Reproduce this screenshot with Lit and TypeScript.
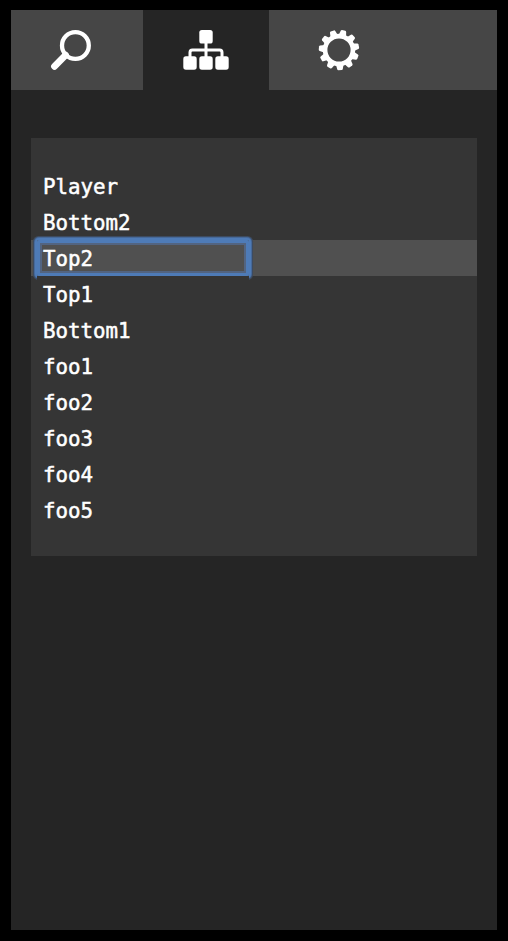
import { LitElement, html, css, svg } from "lit";
import { customElement, property, state } from "lit/decorators.js";
import { classMap } from "lit/directives/class-map.js";

const TEETH = 11;
const teeth = Array.from({ length: TEETH }, (_, i) => 177 + (i * 360) / TEETH);

const searchIcon = svg`
  <circle cx="24.4" cy="15.5" r="13.4" fill="none" stroke="#fff" stroke-width="4.3"/>
  <path d="M14.6 25.2 3.5 36.4" stroke="#fff" stroke-width="6.8" stroke-linecap="round"/>
`;

const treeIcon = svg`
  <path d="M23 12V30M7 30V22.4Q7 20 9.4 20H36.6Q39 20 39 22.4V30" fill="none" stroke="#fff" stroke-width="3"/>
  <g fill="#fff">
    <rect x="16.3" y="0" width="13.4" height="13.6" rx="2.6"/>
    <rect x="0.3" y="26.3" width="13.4" height="13.4" rx="2.6"/>
    <rect x="16.3" y="26.3" width="13.4" height="13.4" rx="2.6"/>
    <rect x="32.3" y="26.3" width="13.4" height="13.4" rx="2.6"/>
  </g>
`;

const gearIcon = svg`
  <circle cx="20" cy="20" r="13.9" fill="none" stroke="#fff" stroke-width="4.6"/>
  ${teeth.map(
    (a) => svg`<path transform="rotate(${a} 20 20)" fill="#fff"
      d="M16.2 5.4 17.2 .8Q17.4 0 18.3 -.2H21.7Q22.6 0 22.8 .8L23.8 5.4Z"/>`
  )}
`;

@customElement("tree-row")
class TreeRow extends LitElement {
  @property() label = "";
  @property({ type: Boolean }) selected = false;

  static styles = css`
    :host { display: block; height: 36px; }
    .row { height: 36px; padding-left: 6px; background: #353535; }
    .row.selected { background: #505050; }
    .field {
      position: relative;
      box-sizing: border-box;
      width: 212px;
      height: 36px;
      padding-left: 6px;
      background: #353535;
      color: #fff;
      font: 20.8px/39px "DejaVu Sans Mono", monospace;
      -webkit-text-stroke: 0.5px #fff;
      white-space: pre;
    }
    .selected .field {
      background: #505050;
      border-radius: 2px;
      box-shadow: 0 0 0 2px #4e7bb7, 0 0 0 3px #46699a, 0 0 0 4px #3d4b60,
        inset 0 0 0 3px #4e7bb7, inset 0 0 0 5px #526481;
    }
  `;

  render() {
    return html`<div class=${classMap({ row: true, selected: this.selected })}>
      <div class="field">${this.label}</div>
    </div>`;
  }
}

@customElement("app-root")
class AppRoot extends LitElement {
  @state() private current = "Top2";
  private items = ["Player", "Bottom2", "Top2", "Top1", "Bottom1", "foo1", "foo2", "foo3", "foo4", "foo5"];

  static styles = css`
    :host {
      display: block;
      box-sizing: border-box;
      height: 941px;
      padding: 10px 11px 11px;
      background: #000;
    }
    .panel { height: 920px; background: #252525; }
    .tabs {
      display: grid;
      grid-template-columns: 132px 126px 1fr;
      height: 80px;
    }
    .tab { display: flex; align-items: center; background: #464646; }
    .tab.active { background: #252525; }
    .tab svg { display: block; overflow: visible; }
    .search { padding-left: 40px; }
    .tree { padding-left: 40px; }
    .settings { padding-left: 50px; }
    .list {
      box-sizing: border-box;
      height: 418px;
      margin: 48px 20px 0;
      padding-top: 30px;
      background: #353535;
    }
  `;

  render() {
    return html`
      <div class="panel">
        <div class="tabs">
          <div class="tab search"><svg width="40" height="40">${searchIcon}</svg></div>
          <div class="tab tree active"><svg width="46" height="40">${treeIcon}</svg></div>
          <div class="tab settings"><svg width="40" height="40">${gearIcon}</svg></div>
        </div>
        <div class="list">
          ${this.items.map(
            (name) => html`<tree-row
              .label=${name}
              .selected=${name === this.current}
              @click=${() => (this.current = name)}
            ></tree-row>`
          )}
        </div>
      </div>
    `;
  }
}
